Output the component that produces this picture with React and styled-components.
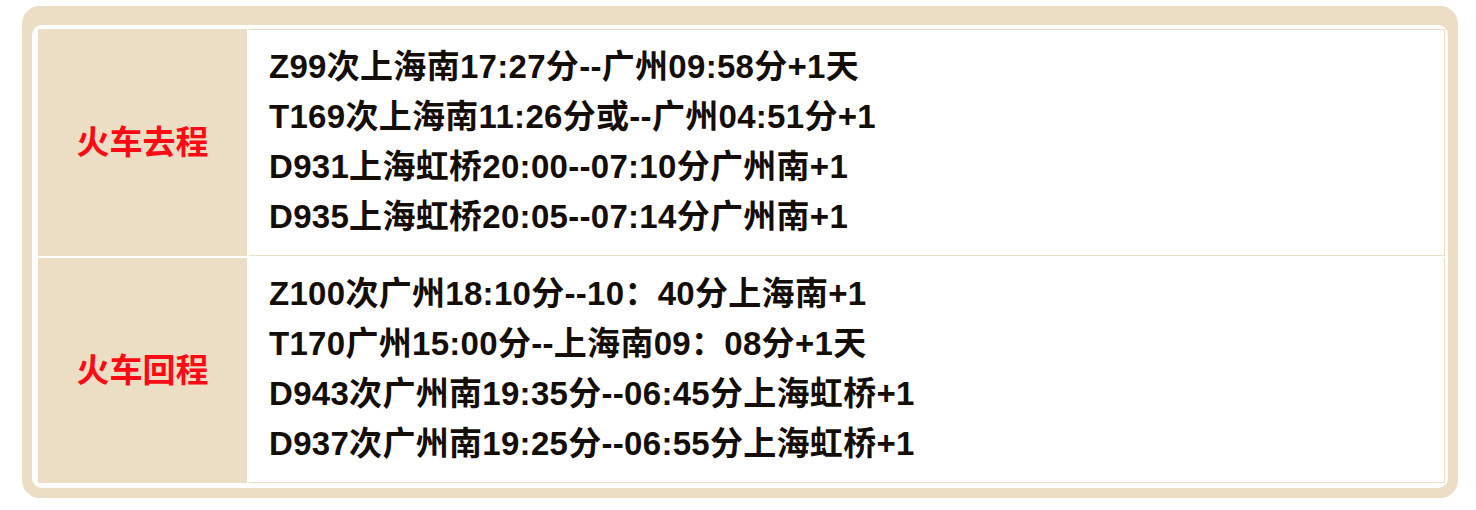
import React from 'react';
import styled, { createGlobalStyle } from 'styled-components';

const beige = '#ecdec4';

const GlobalStyle = createGlobalStyle`
    html, body {
        margin: 0;
        padding: 0;
        background: #fff;
    }
    body {
        font-family: "Liberation Sans", "Noto Sans CJK SC", sans-serif;
    }
`;

const trips = [
    {
        label: '火车去程',
        lines: [
            'Z99次上海南17:27分--广州09:58分+1天',
            'T169次上海南11:26分或--广州04:51分+1',
            'D931上海虹桥20:00--07:10分广州南+1',
            'D935上海虹桥20:05--07:14分广州南+1',
        ],
    },
    {
        label: '火车回程',
        lines: [
            'Z100次广州18:10分--10：40分上海南+1',
            'T170广州15:00分--上海南09：08分+1天',
            'D943次广州南19:35分--06:45分上海虹桥+1',
            'D937次广州南19:25分--06:55分上海虹桥+1',
        ],
    },
];

function App() {
    return (
        <>
            <GlobalStyle />
            <Frame>
                <Card>
                    <Table>
                        {trips.map((trip, i) => (
                            <React.Fragment key={trip.label}>
                                <LabelCell>{trip.label}</LabelCell>
                                <InfoCell $first={i === 0}>
                                    {trip.lines.map((line) => (
                                        <Line key={line}>{line}</Line>
                                    ))}
                                </InfoCell>
                            </React.Fragment>
                        ))}
                    </Table>
                </Card>
            </Frame>
        </>
    );
}

export default App;

const Frame = styled.div`
    box-sizing: border-box;
    margin: 6px 0 0 22px;
    width: 1436px;
    padding: 19px 10px 10px 10px;
    background: ${beige};
    border-radius: 18px;
`;

const Card = styled.div`
    background: #fff;
    border-radius: 10px;
    padding: 4px 3px 5px 6px;
`;

const Table = styled.div`
    display: grid;
    grid-template-columns: 209px 1fr;
    column-gap: 2px;
    row-gap: 2px;
`;

const LabelCell = styled.div`
    background: ${beige};
    display: flex;
    align-items: center;
    justify-content: center;
    padding-bottom: 6px;
    color: #ff0a14;
    font-size: 33px;
    font-weight: bold;
`;

const InfoCell = styled.div`
    background: #fff;
    border-right: 1px solid ${beige};
    border-bottom: 1px solid ${beige};
    border-top: ${(p) => (p.$first ? `1px solid ${beige}` : 'none')};
    padding: ${(p) => (p.$first ? '12px 20px 13px 20px' : '11px 20px 13px 20px')};
`;

const Line = styled.div`
    font-size: 33px;
    font-weight: bold;
    line-height: 50px;
    letter-spacing: 0.3px;
    color: #140d08;
    white-space: nowrap;
`;
